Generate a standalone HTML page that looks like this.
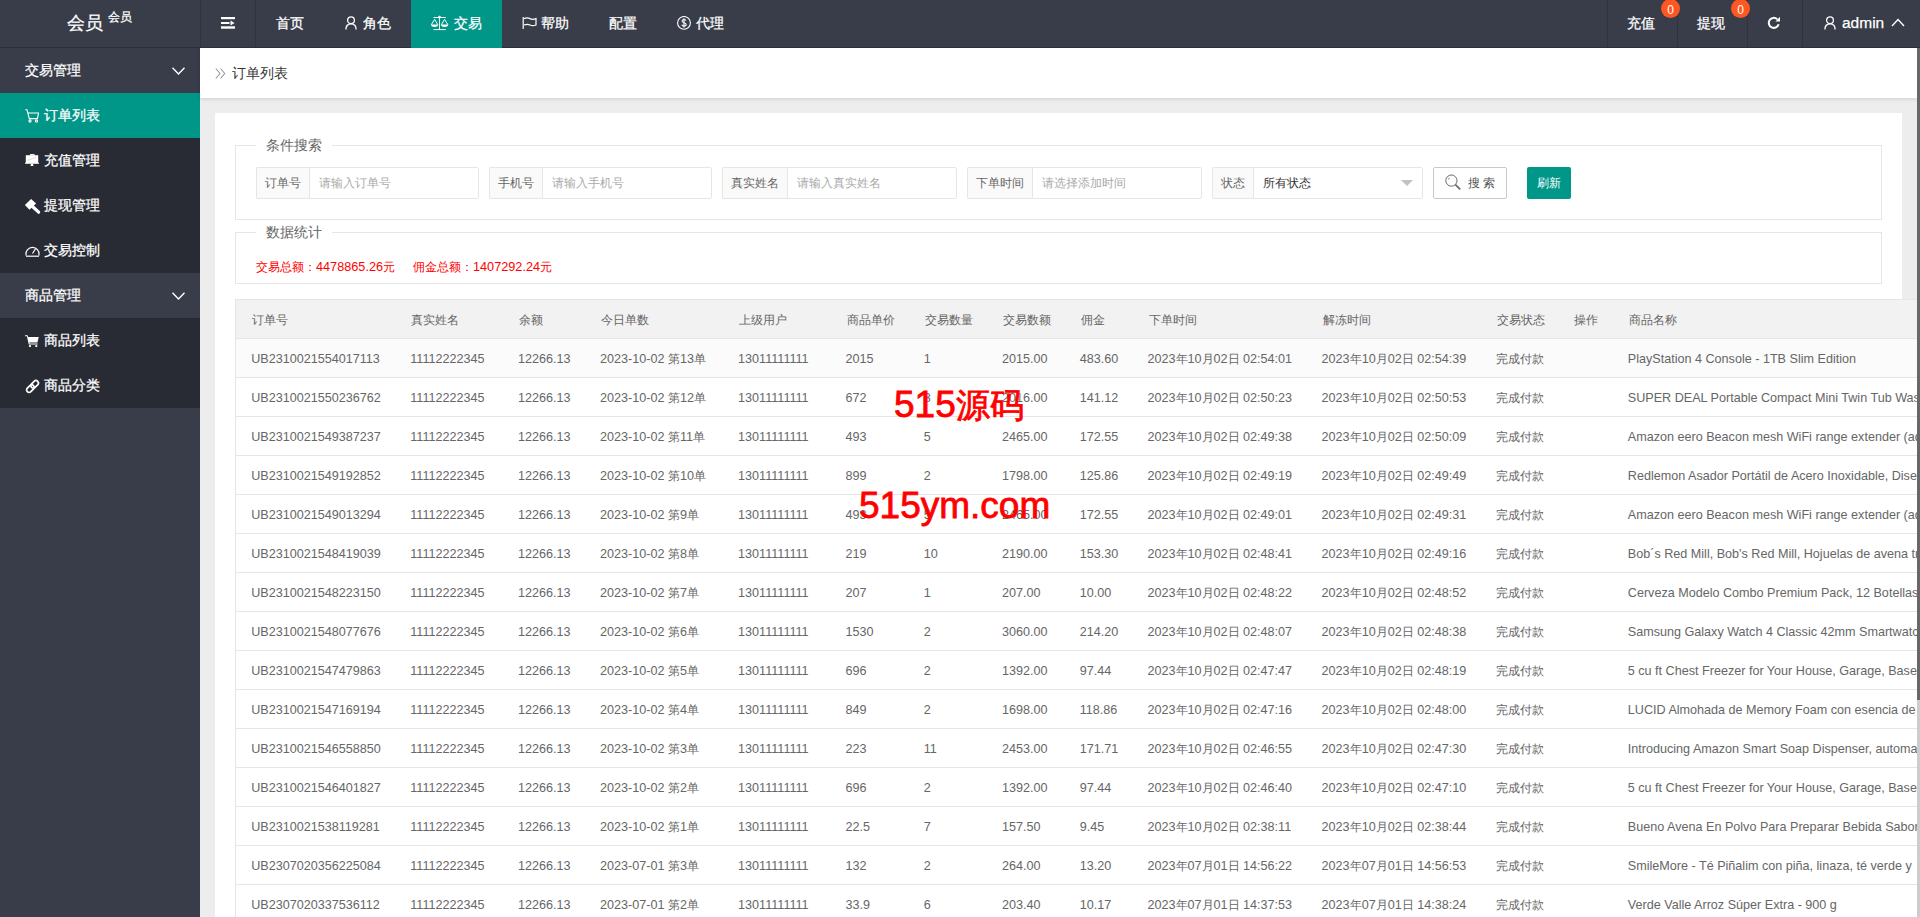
<!DOCTYPE html>
<html><head><meta charset="utf-8">
<style>
*{box-sizing:border-box;margin:0;padding:0}
html,body{width:1920px;height:917px;overflow:hidden}
body{position:relative;background:#ededed;font-family:"Liberation Sans",sans-serif;color:#666}
.abs{position:absolute}
.hd{position:absolute;z-index:3;left:0;top:0;width:1920px;height:48px;background:#393d49;border-bottom:1px solid #2c2f3a}
.hd .t{position:absolute;color:#fff;-webkit-text-stroke:0.25px #fff;font-size:14px;line-height:16px;white-space:nowrap}
.sep{position:absolute;top:0;width:1px;height:47px;background:#30333c}
.side{position:absolute;left:0;top:48px;width:200px;height:869px;background:#393d49}
.mi{position:absolute;left:0;width:200px;height:45px;color:#fff;-webkit-text-stroke:0.25px #fff;font-size:14px;line-height:45px;white-space:nowrap}
.mi .tx{position:absolute;left:25px;top:0}
.mi.ch{background:#282b33}
.mi.ch .tx{left:44px}
.mi.on{background:#009688}
.mi svg{position:absolute}
.crumb{position:absolute;left:200px;top:48px;width:1717px;height:50px;background:#fff;box-shadow:0 1px 4px rgba(0,0,0,.13)}
.card{position:absolute;left:215px;top:113px;width:1687px;height:804px;background:#fff}
.fs{position:absolute;left:235px;width:1647px;border:1px solid #e6e6e6}
.lg{position:absolute;left:256px;padding:0 10px;background:#fff;font-size:14px;line-height:16px;color:#666;white-space:nowrap}
.ig{position:absolute;top:167px;height:32px}
.ig .lb{position:absolute;left:0;top:0;height:32px;background:#fafafa;border:1px solid #e6e6e6;border-right:none;border-radius:2px 0 0 2px;font-size:12px;line-height:30px;padding:0 8px;color:#666;white-space:nowrap}
.ig .in{position:absolute;top:0;height:32px;background:#fff;border:1px solid #e6e6e6;border-radius:0 2px 2px 0;font-size:12px;line-height:30px;padding-left:9px;color:#aaa;white-space:nowrap}
.red{position:absolute;top:259px;font-size:12px;line-height:16px;color:#f00;white-space:nowrap}
.tbl{position:absolute;left:235px;top:299px;width:1682px;height:618px;border-top:1px solid #e6e6e6;border-left:1px solid #e6e6e6;background:#fff;overflow:hidden}
.thead{position:absolute;left:0;top:0;width:100%;height:39px;background:#f2f2f2;border-bottom:1px solid #e6e6e6}
.tr{position:absolute;left:0;width:100%;height:39px;background:#fff;border-bottom:1px solid #e6e6e6}
.tr.r1{background:#fbfbfb}
.th,.td{position:absolute;line-height:38px;font-size:12.6px;margin-left:-1px;margin-top:1px;color:#666;white-space:nowrap}
.th{margin-left:0;color:#666;white-space:nowrap}
.th i,.td i{font-style:normal;font-size:12px}
.wm{position:absolute;color:#f00;font-weight:normal;-webkit-text-stroke:0.8px #f00;white-space:nowrap;font-family:"Liberation Sans",sans-serif}
.sb{position:absolute;left:1917px;top:48px;width:3px;height:869px;background:#cdcdcd}
.sb i{position:absolute;left:0;top:0;width:3px;height:652px;background:#686868}
</style></head><body>

<!-- header -->
<div class="hd">
  <div class="t" style="left:67px;top:13px;font-size:18px;line-height:20px">会员</div>
  <div class="t" style="left:108px;top:10px;font-size:12px;line-height:14px">会员</div>
  <div class="sep" style="left:200px"></div>
  <div class="sep" style="left:255px"></div>
  <svg class="abs" style="left:221px;top:17px" width="15" height="12" viewBox="0 0 15 12" fill="#fff"><rect x="0" y="0" width="14" height="2.2"/><rect x="0" y="5" width="8.5" height="2"/><polygon points="9.5,3.6 13.6,6 9.5,8.4"/><rect x="0" y="9.3" width="14" height="2.4"/></svg>
  <div class="t" style="left:276px;top:15px">首页</div>
  <svg class="abs" style="left:345px;top:16px" width="12" height="14" viewBox="0 0 12 14" fill="none" stroke="#fff" stroke-width="1.3"><circle cx="6" cy="4.2" r="3.4"/><path d="M0.9 13.5C0.9 9.8 3.2 7.8 6 7.8S11.1 9.8 11.1 13.5"/></svg>
  <div class="t" style="left:363px;top:15px">角色</div>
  <div class="abs" style="left:411px;top:0;width:91px;height:48px;background:#009688"></div>
  <svg class="abs" style="left:430px;top:15px" width="20" height="16" viewBox="0 0 20 16" fill="none" stroke="#fff" stroke-width="1"><path d="M3.5 2.5H15.7M9.5 2.5V14.6M3.5 14.6H15.7M4.6 4.4L1.3 9.7M4.6 4.4L7.8 9.7M14.6 4.4L11.3 9.7M14.6 4.4L17.9 9.7"/><circle cx="9.5" cy="2.2" r="1" fill="#fff"/><path d="M1 9.6H8.2A3.6 2.4 0 0 1 1 9.6Z M11 9.6H18.2A3.6 2.4 0 0 1 11 9.6Z" fill="#fff" stroke="none"/></svg>
  <div class="t" style="left:454px;top:15px">交易</div>
  <svg class="abs" style="left:521px;top:16px" width="16" height="14" viewBox="0 0 16 14" fill="none" stroke="#fff" stroke-width="1.2"><path d="M2.2 1V13"/><path d="M3 2.6C5.5 1.6 7.5 1.8 9 2.6S12.5 3.6 15 2.6V9C12.5 10 10.5 9.8 9 9S5.5 8 3 9"/></svg>
  <div class="t" style="left:541px;top:15px">帮助</div>
  <div class="t" style="left:609px;top:15px">配置</div>
  <svg class="abs" style="left:677px;top:16px" width="15" height="15" viewBox="0 0 15 15" fill="none" stroke="#fff" stroke-width="1.1"><circle cx="7" cy="6.9" r="6.4"/><path d="M9 4.6C8.6 3.9 7.9 3.5 7 3.5 5.9 3.5 5.1 4.1 5.1 5 5.1 7.2 9.2 6.3 9.2 8.6 9.2 9.6 8.3 10.2 7 10.2 5.9 10.2 5.1 9.6 4.8 8.8M7 2.2V11.6"/></svg>
  <div class="t" style="left:696px;top:15px">代理</div>

  <div class="sep" style="left:1607px"></div>
  <div class="sep" style="left:1677px"></div>
  <div class="sep" style="left:1747px"></div>
  <div class="sep" style="left:1802px"></div>
  <div class="t" style="left:1627px;top:15px">充值</div>
  <div class="abs" style="left:1661px;top:-1px;width:19px;height:19px;border-radius:50%;background:#ff5722;color:#fff;font-size:12px;line-height:22px;text-align:center">0</div>
  <div class="t" style="left:1697px;top:15px">提现</div>
  <div class="abs" style="left:1731px;top:-1px;width:19px;height:19px;border-radius:50%;background:#ff5722;color:#fff;font-size:12px;line-height:22px;text-align:center">0</div>
  <svg class="abs" style="left:1767px;top:16px" width="14" height="14" viewBox="0 0 14 14" fill="none" stroke="#fff" stroke-width="2"><path d="M11.6 8.2A5 5 0 1 1 10.2 3.2"/><path d="M13 0.8V5.4H8.4Z" fill="#fff" stroke="none"/></svg>
  <svg class="abs" style="left:1824px;top:16px" width="12" height="14" viewBox="0 0 12 14" fill="none" stroke="#fff" stroke-width="1.3"><circle cx="6" cy="4.2" r="3.4"/><path d="M0.9 13.5C0.9 9.8 3.2 7.8 6 7.8S11.1 9.8 11.1 13.5"/></svg>
  <div class="t" style="left:1842px;top:14px;font-size:15.5px;line-height:18px">admin</div>
  <svg class="abs" style="left:1891px;top:18px" width="14" height="9" viewBox="0 0 14 9" fill="none" stroke="#fff" stroke-width="1.4"><path d="M1 8L7 1.5L13 8"/></svg>
</div>

<!-- sidebar -->
<div class="side">
  <div class="mi" style="top:0"><span class="tx">交易管理</span><svg style="left:172px;top:19px" width="13" height="8" viewBox="0 0 13 8" fill="none" stroke="#fff" stroke-width="1.4"><path d="M0.5 0.8L6.5 7L12.5 0.8"/></svg></div>
  <div class="mi ch on" style="top:45px"><svg style="left:25px;top:16px" width="14" height="14" viewBox="0 0 14 14" fill="none" stroke="#fff" stroke-width="1.1"><path d="M0.3 0.8H2L4.3 9.6H12.4L13.6 4H3"/><circle cx="5" cy="12" r="1.1"/><circle cx="11.5" cy="12" r="1.1"/></svg><span class="tx">订单列表</span></div>
  <div class="mi ch" style="top:90px"><svg style="left:24px;top:16px" width="16" height="13" viewBox="0 0 16 13"><rect x="6" y="0" width="4.6" height="1.6" fill="#e8e8f0"/><rect x="1.8" y="1.2" width="12.4" height="8" fill="#fff"/><rect x="1" y="8.6" width="14" height="1.2" fill="#f4f4f4"/><path d="M3.5 6.5L6 5.5L8 4.8L10.5 4.2L12.5 3" stroke="#e9c9c9" stroke-width="0.8" fill="none"/><path d="M7.2 9.6H8.8L9.6 12H6.4Z" fill="#fff"/></svg><span class="tx">充值管理</span></div>
  <div class="mi ch" style="top:135px"><svg style="left:24px;top:15px" width="17" height="17" viewBox="0 0 17 17"><path d="M7.1 0.9L12.1 5.4L5.5 11.7L0.9 7.1Z" fill="#fff"/><path d="M8.5 8.5L14.6 14.2" stroke="#fff" stroke-width="3.2" stroke-linecap="round"/></svg><span class="tx">提现管理</span></div>
  <div class="mi ch" style="top:180px"><svg style="left:25px;top:16px" width="15" height="13" viewBox="0 0 15 13" fill="none" stroke="#fff" stroke-width="1.2"><path d="M1.2 11.5A6.5 6.5 0 1 1 13.8 11.5"/><path d="M7.5 9.5L10.5 4.8"/><path d="M1 12.2H14" stroke-width="1.2"/></svg><span class="tx">交易控制</span></div>
  <div class="mi" style="top:225px"><span class="tx">商品管理</span><svg style="left:172px;top:19px" width="13" height="8" viewBox="0 0 13 8" fill="none" stroke="#fff" stroke-width="1.4"><path d="M0.5 0.8L6.5 7L12.5 0.8"/></svg></div>
  <div class="mi ch" style="top:270px"><svg style="left:25px;top:17px" width="14" height="12" viewBox="0 0 14 12" fill="#fff"><path d="M0 0.3H2.5L3.2 2H13.8L12.4 7.5H4.3L4.6 8.6H12.6V9.6H3.8L1.9 1.3H0Z"/><circle cx="5" cy="11" r="1.1"/><circle cx="11.3" cy="11" r="1.1"/></svg><span class="tx">商品列表</span></div>
  <div class="mi ch" style="top:315px"><svg style="left:24px;top:15px" width="17" height="17" viewBox="0 0 17 17" fill="none" stroke="#fff" stroke-width="1.7"><g transform="rotate(-45 8.5 8.5)"><rect x="1.2" y="6" width="8.6" height="5" rx="2.5"/><rect x="7.2" y="6" width="8.6" height="5" rx="2.5"/></g></svg><span class="tx">商品分类</span></div>
</div>

<!-- breadcrumb -->
<div class="crumb">
  <svg class="abs" style="left:15px;top:20px" width="11" height="11" viewBox="0 0 11 11" fill="none" stroke="#999" stroke-width="1.1"><path d="M0.8 0.5L5 5.5L0.8 10.5M5.5 0.5L9.7 5.5L5.5 10.5"/></svg>
  <div class="abs" style="left:32px;top:17px;font-size:14px;line-height:16px;color:#333;white-space:nowrap">订单列表</div>
</div>

<!-- card -->
<div class="card"></div>
<div class="fs" style="top:145px;height:75px"></div>
<div class="lg" style="top:137px">条件搜索</div>
<div class="ig" style="left:256px"><div class="lb" style="width:53px">订单号</div><div class="in" style="left:53px;width:170px">请输入订单号</div></div>
<div class="ig" style="left:489px"><div class="lb" style="width:53px">手机号</div><div class="in" style="left:53px;width:170px">请输入手机号</div></div>
<div class="ig" style="left:722px"><div class="lb" style="width:65px">真实姓名</div><div class="in" style="left:65px;width:170px">请输入真实姓名</div></div>
<div class="ig" style="left:967px"><div class="lb" style="width:65px">下单时间</div><div class="in" style="left:65px;width:170px">请选择添加时间</div></div>
<div class="ig" style="left:1212px"><div class="lb" style="width:41px">状态</div><div class="in" style="left:41px;width:170px;color:#333">所有状态</div>
  <svg class="abs" style="left:189px;top:13px" width="12" height="6" viewBox="0 0 12 6" fill="#c2c2c2"><path d="M0 0H12L6 6Z"/></svg></div>
<div class="abs" style="left:1433px;top:167px;width:74px;height:32px;border:1px solid #c9c9c9;border-radius:2px;background:#fff"></div>
<svg class="abs" style="left:1445px;top:174px" width="17" height="17" viewBox="0 0 17 17" fill="none" stroke="#666" stroke-width="1"><circle cx="6.4" cy="6.6" r="5.6"/><path d="M10.4 10.6L15.2 15.4" stroke-width="1.6"/><path d="M3.6 5.4A3 3 0 0 1 4.6 3.8"/></svg>
<div class="abs" style="left:1468px;top:176px;font-size:12px;line-height:14px;color:#555;white-space:nowrap">搜 索</div>
<div class="abs" style="left:1527px;top:167px;width:44px;height:32px;border-radius:2px;background:#009688;color:#fff;font-size:12px;line-height:32px;text-align:center">刷新</div>

<div class="fs" style="top:232px;height:52px"></div>
<div class="lg" style="top:224px">数据统计</div>
<div class="red" style="left:256px">交易总额：<span style="font-size:12.7px">4478865.26</span>元</div>
<div class="red" style="left:413px">佣金总额：<span style="font-size:12.7px">1407292.24</span>元</div>

<!-- table -->
<div class="tbl">
<div class="thead"></div>
<span class="th" style="left:16.20px;top:0px"><i>订单号</i></span><span class="th" style="left:175.25px;top:0px"><i>真实姓名</i></span><span class="th" style="left:282.90px;top:0px"><i>余额</i></span><span class="th" style="left:365.00px;top:0px"><i>今日单数</i></span><span class="th" style="left:503.10px;top:0px"><i>上级用户</i></span><span class="th" style="left:610.60px;top:0px"><i>商品单价</i></span><span class="th" style="left:688.75px;top:0px"><i>交易数量</i></span><span class="th" style="left:766.90px;top:0px"><i>交易数额</i></span><span class="th" style="left:844.70px;top:0px"><i>佣金</i></span><span class="th" style="left:912.50px;top:0px"><i>下单时间</i></span><span class="th" style="left:1086.60px;top:0px"><i>解冻时间</i></span><span class="th" style="left:1260.60px;top:0px"><i>交易状态</i></span><span class="th" style="left:1338.40px;top:0px"><i>操作</i></span><span class="th" style="left:1392.80px;top:0px"><i>商品名称</i></span>
<div class="tr r1" style="top:39px"></div>
<span class="td" style="left:16.20px;top:39px">UB2310021554017113</span><span class="td" style="left:175.25px;top:39px">11112222345</span><span class="td" style="left:282.90px;top:39px">12266.13</span><span class="td" style="left:365.00px;top:39px">2023-10-02 <i>第</i>13<i>单</i></span><span class="td" style="left:503.10px;top:39px">13011111111</span><span class="td" style="left:610.60px;top:39px">2015</span><span class="td" style="left:688.75px;top:39px">1</span><span class="td" style="left:766.90px;top:39px">2015.00</span><span class="td" style="left:844.70px;top:39px">483.60</span><span class="td" style="left:912.50px;top:39px">2023<i>年</i>10<i>月</i>02<i>日</i> 02:54:01</span><span class="td" style="left:1086.60px;top:39px">2023<i>年</i>10<i>月</i>02<i>日</i> 02:54:39</span><span class="td" style="left:1260.60px;top:39px"><i>完成付款</i></span><span class="td" style="left:1338.40px;top:39px"></span><span class="td" style="left:1392.80px;top:39px">PlayStation 4 Console - 1TB Slim Edition</span>
<div class="tr" style="top:78px"></div>
<span class="td" style="left:16.20px;top:78px">UB2310021550236762</span><span class="td" style="left:175.25px;top:78px">11112222345</span><span class="td" style="left:282.90px;top:78px">12266.13</span><span class="td" style="left:365.00px;top:78px">2023-10-02 <i>第</i>12<i>单</i></span><span class="td" style="left:503.10px;top:78px">13011111111</span><span class="td" style="left:610.60px;top:78px">672</span><span class="td" style="left:688.75px;top:78px">3</span><span class="td" style="left:766.90px;top:78px">2016.00</span><span class="td" style="left:844.70px;top:78px">141.12</span><span class="td" style="left:912.50px;top:78px">2023<i>年</i>10<i>月</i>02<i>日</i> 02:50:23</span><span class="td" style="left:1086.60px;top:78px">2023<i>年</i>10<i>月</i>02<i>日</i> 02:50:53</span><span class="td" style="left:1260.60px;top:78px"><i>完成付款</i></span><span class="td" style="left:1338.40px;top:78px"></span><span class="td" style="left:1392.80px;top:78px">SUPER DEAL Portable Compact Mini Twin Tub Washing Machine</span>
<div class="tr" style="top:117px"></div>
<span class="td" style="left:16.20px;top:117px">UB2310021549387237</span><span class="td" style="left:175.25px;top:117px">11112222345</span><span class="td" style="left:282.90px;top:117px">12266.13</span><span class="td" style="left:365.00px;top:117px">2023-10-02 <i>第</i>11<i>单</i></span><span class="td" style="left:503.10px;top:117px">13011111111</span><span class="td" style="left:610.60px;top:117px">493</span><span class="td" style="left:688.75px;top:117px">5</span><span class="td" style="left:766.90px;top:117px">2465.00</span><span class="td" style="left:844.70px;top:117px">172.55</span><span class="td" style="left:912.50px;top:117px">2023<i>年</i>10<i>月</i>02<i>日</i> 02:49:38</span><span class="td" style="left:1086.60px;top:117px">2023<i>年</i>10<i>月</i>02<i>日</i> 02:50:09</span><span class="td" style="left:1260.60px;top:117px"><i>完成付款</i></span><span class="td" style="left:1338.40px;top:117px"></span><span class="td" style="left:1392.80px;top:117px">Amazon eero Beacon mesh WiFi range extender (add-on to eero)</span>
<div class="tr" style="top:156px"></div>
<span class="td" style="left:16.20px;top:156px">UB2310021549192852</span><span class="td" style="left:175.25px;top:156px">11112222345</span><span class="td" style="left:282.90px;top:156px">12266.13</span><span class="td" style="left:365.00px;top:156px">2023-10-02 <i>第</i>10<i>单</i></span><span class="td" style="left:503.10px;top:156px">13011111111</span><span class="td" style="left:610.60px;top:156px">899</span><span class="td" style="left:688.75px;top:156px">2</span><span class="td" style="left:766.90px;top:156px">1798.00</span><span class="td" style="left:844.70px;top:156px">125.86</span><span class="td" style="left:912.50px;top:156px">2023<i>年</i>10<i>月</i>02<i>日</i> 02:49:19</span><span class="td" style="left:1086.60px;top:156px">2023<i>年</i>10<i>月</i>02<i>日</i> 02:49:49</span><span class="td" style="left:1260.60px;top:156px"><i>完成付款</i></span><span class="td" style="left:1338.40px;top:156px"></span><span class="td" style="left:1392.80px;top:156px">Redlemon Asador Portátil de Acero Inoxidable, Diseño</span>
<div class="tr" style="top:195px"></div>
<span class="td" style="left:16.20px;top:195px">UB2310021549013294</span><span class="td" style="left:175.25px;top:195px">11112222345</span><span class="td" style="left:282.90px;top:195px">12266.13</span><span class="td" style="left:365.00px;top:195px">2023-10-02 <i>第</i>9<i>单</i></span><span class="td" style="left:503.10px;top:195px">13011111111</span><span class="td" style="left:610.60px;top:195px">493</span><span class="td" style="left:688.75px;top:195px">5</span><span class="td" style="left:766.90px;top:195px">2465.00</span><span class="td" style="left:844.70px;top:195px">172.55</span><span class="td" style="left:912.50px;top:195px">2023<i>年</i>10<i>月</i>02<i>日</i> 02:49:01</span><span class="td" style="left:1086.60px;top:195px">2023<i>年</i>10<i>月</i>02<i>日</i> 02:49:31</span><span class="td" style="left:1260.60px;top:195px"><i>完成付款</i></span><span class="td" style="left:1338.40px;top:195px"></span><span class="td" style="left:1392.80px;top:195px">Amazon eero Beacon mesh WiFi range extender (add-on to eero)</span>
<div class="tr" style="top:234px"></div>
<span class="td" style="left:16.20px;top:234px">UB2310021548419039</span><span class="td" style="left:175.25px;top:234px">11112222345</span><span class="td" style="left:282.90px;top:234px">12266.13</span><span class="td" style="left:365.00px;top:234px">2023-10-02 <i>第</i>8<i>单</i></span><span class="td" style="left:503.10px;top:234px">13011111111</span><span class="td" style="left:610.60px;top:234px">219</span><span class="td" style="left:688.75px;top:234px">10</span><span class="td" style="left:766.90px;top:234px">2190.00</span><span class="td" style="left:844.70px;top:234px">153.30</span><span class="td" style="left:912.50px;top:234px">2023<i>年</i>10<i>月</i>02<i>日</i> 02:48:41</span><span class="td" style="left:1086.60px;top:234px">2023<i>年</i>10<i>月</i>02<i>日</i> 02:49:16</span><span class="td" style="left:1260.60px;top:234px"><i>完成付款</i></span><span class="td" style="left:1338.40px;top:234px"></span><span class="td" style="left:1392.80px;top:234px">Bob´s Red Mill, Bob's Red Mill, Hojuelas de avena tradicionales</span>
<div class="tr" style="top:273px"></div>
<span class="td" style="left:16.20px;top:273px">UB2310021548223150</span><span class="td" style="left:175.25px;top:273px">11112222345</span><span class="td" style="left:282.90px;top:273px">12266.13</span><span class="td" style="left:365.00px;top:273px">2023-10-02 <i>第</i>7<i>单</i></span><span class="td" style="left:503.10px;top:273px">13011111111</span><span class="td" style="left:610.60px;top:273px">207</span><span class="td" style="left:688.75px;top:273px">1</span><span class="td" style="left:766.90px;top:273px">207.00</span><span class="td" style="left:844.70px;top:273px">10.00</span><span class="td" style="left:912.50px;top:273px">2023<i>年</i>10<i>月</i>02<i>日</i> 02:48:22</span><span class="td" style="left:1086.60px;top:273px">2023<i>年</i>10<i>月</i>02<i>日</i> 02:48:52</span><span class="td" style="left:1260.60px;top:273px"><i>完成付款</i></span><span class="td" style="left:1338.40px;top:273px"></span><span class="td" style="left:1392.80px;top:273px">Cerveza Modelo Combo Premium Pack, 12 Botellas</span>
<div class="tr" style="top:312px"></div>
<span class="td" style="left:16.20px;top:312px">UB2310021548077676</span><span class="td" style="left:175.25px;top:312px">11112222345</span><span class="td" style="left:282.90px;top:312px">12266.13</span><span class="td" style="left:365.00px;top:312px">2023-10-02 <i>第</i>6<i>单</i></span><span class="td" style="left:503.10px;top:312px">13011111111</span><span class="td" style="left:610.60px;top:312px">1530</span><span class="td" style="left:688.75px;top:312px">2</span><span class="td" style="left:766.90px;top:312px">3060.00</span><span class="td" style="left:844.70px;top:312px">214.20</span><span class="td" style="left:912.50px;top:312px">2023<i>年</i>10<i>月</i>02<i>日</i> 02:48:07</span><span class="td" style="left:1086.60px;top:312px">2023<i>年</i>10<i>月</i>02<i>日</i> 02:48:38</span><span class="td" style="left:1260.60px;top:312px"><i>完成付款</i></span><span class="td" style="left:1338.40px;top:312px"></span><span class="td" style="left:1392.80px;top:312px">Samsung Galaxy Watch 4 Classic 42mm Smartwatch</span>
<div class="tr" style="top:351px"></div>
<span class="td" style="left:16.20px;top:351px">UB2310021547479863</span><span class="td" style="left:175.25px;top:351px">11112222345</span><span class="td" style="left:282.90px;top:351px">12266.13</span><span class="td" style="left:365.00px;top:351px">2023-10-02 <i>第</i>5<i>单</i></span><span class="td" style="left:503.10px;top:351px">13011111111</span><span class="td" style="left:610.60px;top:351px">696</span><span class="td" style="left:688.75px;top:351px">2</span><span class="td" style="left:766.90px;top:351px">1392.00</span><span class="td" style="left:844.70px;top:351px">97.44</span><span class="td" style="left:912.50px;top:351px">2023<i>年</i>10<i>月</i>02<i>日</i> 02:47:47</span><span class="td" style="left:1086.60px;top:351px">2023<i>年</i>10<i>月</i>02<i>日</i> 02:48:19</span><span class="td" style="left:1260.60px;top:351px"><i>完成付款</i></span><span class="td" style="left:1338.40px;top:351px"></span><span class="td" style="left:1392.80px;top:351px">5 cu ft Chest Freezer for Your House, Garage, Basement</span>
<div class="tr" style="top:390px"></div>
<span class="td" style="left:16.20px;top:390px">UB2310021547169194</span><span class="td" style="left:175.25px;top:390px">11112222345</span><span class="td" style="left:282.90px;top:390px">12266.13</span><span class="td" style="left:365.00px;top:390px">2023-10-02 <i>第</i>4<i>单</i></span><span class="td" style="left:503.10px;top:390px">13011111111</span><span class="td" style="left:610.60px;top:390px">849</span><span class="td" style="left:688.75px;top:390px">2</span><span class="td" style="left:766.90px;top:390px">1698.00</span><span class="td" style="left:844.70px;top:390px">118.86</span><span class="td" style="left:912.50px;top:390px">2023<i>年</i>10<i>月</i>02<i>日</i> 02:47:16</span><span class="td" style="left:1086.60px;top:390px">2023<i>年</i>10<i>月</i>02<i>日</i> 02:48:00</span><span class="td" style="left:1260.60px;top:390px"><i>完成付款</i></span><span class="td" style="left:1338.40px;top:390px"></span><span class="td" style="left:1392.80px;top:390px">LUCID Almohada de Memory Foam con esencia de lavanda</span>
<div class="tr" style="top:429px"></div>
<span class="td" style="left:16.20px;top:429px">UB2310021546558850</span><span class="td" style="left:175.25px;top:429px">11112222345</span><span class="td" style="left:282.90px;top:429px">12266.13</span><span class="td" style="left:365.00px;top:429px">2023-10-02 <i>第</i>3<i>单</i></span><span class="td" style="left:503.10px;top:429px">13011111111</span><span class="td" style="left:610.60px;top:429px">223</span><span class="td" style="left:688.75px;top:429px">11</span><span class="td" style="left:766.90px;top:429px">2453.00</span><span class="td" style="left:844.70px;top:429px">171.71</span><span class="td" style="left:912.50px;top:429px">2023<i>年</i>10<i>月</i>02<i>日</i> 02:46:55</span><span class="td" style="left:1086.60px;top:429px">2023<i>年</i>10<i>月</i>02<i>日</i> 02:47:30</span><span class="td" style="left:1260.60px;top:429px"><i>完成付款</i></span><span class="td" style="left:1338.40px;top:429px"></span><span class="td" style="left:1392.80px;top:429px">Introducing Amazon Smart Soap Dispenser, automatic</span>
<div class="tr" style="top:468px"></div>
<span class="td" style="left:16.20px;top:468px">UB2310021546401827</span><span class="td" style="left:175.25px;top:468px">11112222345</span><span class="td" style="left:282.90px;top:468px">12266.13</span><span class="td" style="left:365.00px;top:468px">2023-10-02 <i>第</i>2<i>单</i></span><span class="td" style="left:503.10px;top:468px">13011111111</span><span class="td" style="left:610.60px;top:468px">696</span><span class="td" style="left:688.75px;top:468px">2</span><span class="td" style="left:766.90px;top:468px">1392.00</span><span class="td" style="left:844.70px;top:468px">97.44</span><span class="td" style="left:912.50px;top:468px">2023<i>年</i>10<i>月</i>02<i>日</i> 02:46:40</span><span class="td" style="left:1086.60px;top:468px">2023<i>年</i>10<i>月</i>02<i>日</i> 02:47:10</span><span class="td" style="left:1260.60px;top:468px"><i>完成付款</i></span><span class="td" style="left:1338.40px;top:468px"></span><span class="td" style="left:1392.80px;top:468px">5 cu ft Chest Freezer for Your House, Garage, Basement</span>
<div class="tr" style="top:507px"></div>
<span class="td" style="left:16.20px;top:507px">UB2310021538119281</span><span class="td" style="left:175.25px;top:507px">11112222345</span><span class="td" style="left:282.90px;top:507px">12266.13</span><span class="td" style="left:365.00px;top:507px">2023-10-02 <i>第</i>1<i>单</i></span><span class="td" style="left:503.10px;top:507px">13011111111</span><span class="td" style="left:610.60px;top:507px">22.5</span><span class="td" style="left:688.75px;top:507px">7</span><span class="td" style="left:766.90px;top:507px">157.50</span><span class="td" style="left:844.70px;top:507px">9.45</span><span class="td" style="left:912.50px;top:507px">2023<i>年</i>10<i>月</i>02<i>日</i> 02:38:11</span><span class="td" style="left:1086.60px;top:507px">2023<i>年</i>10<i>月</i>02<i>日</i> 02:38:44</span><span class="td" style="left:1260.60px;top:507px"><i>完成付款</i></span><span class="td" style="left:1338.40px;top:507px"></span><span class="td" style="left:1392.80px;top:507px">Bueno Avena En Polvo Para Preparar Bebida Sabor Natural</span>
<div class="tr" style="top:546px"></div>
<span class="td" style="left:16.20px;top:546px">UB2307020356225084</span><span class="td" style="left:175.25px;top:546px">11112222345</span><span class="td" style="left:282.90px;top:546px">12266.13</span><span class="td" style="left:365.00px;top:546px">2023-07-01 <i>第</i>3<i>单</i></span><span class="td" style="left:503.10px;top:546px">13011111111</span><span class="td" style="left:610.60px;top:546px">132</span><span class="td" style="left:688.75px;top:546px">2</span><span class="td" style="left:766.90px;top:546px">264.00</span><span class="td" style="left:844.70px;top:546px">13.20</span><span class="td" style="left:912.50px;top:546px">2023<i>年</i>07<i>月</i>01<i>日</i> 14:56:22</span><span class="td" style="left:1086.60px;top:546px">2023<i>年</i>07<i>月</i>01<i>日</i> 14:56:53</span><span class="td" style="left:1260.60px;top:546px"><i>完成付款</i></span><span class="td" style="left:1338.40px;top:546px"></span><span class="td" style="left:1392.80px;top:546px">SmileMore - Té Piñalim con piña, linaza, té verde y</span>
<div class="tr" style="top:585px"></div>
<span class="td" style="left:16.20px;top:585px">UB2307020337536112</span><span class="td" style="left:175.25px;top:585px">11112222345</span><span class="td" style="left:282.90px;top:585px">12266.13</span><span class="td" style="left:365.00px;top:585px">2023-07-01 <i>第</i>2<i>单</i></span><span class="td" style="left:503.10px;top:585px">13011111111</span><span class="td" style="left:610.60px;top:585px">33.9</span><span class="td" style="left:688.75px;top:585px">6</span><span class="td" style="left:766.90px;top:585px">203.40</span><span class="td" style="left:844.70px;top:585px">10.17</span><span class="td" style="left:912.50px;top:585px">2023<i>年</i>07<i>月</i>01<i>日</i> 14:37:53</span><span class="td" style="left:1086.60px;top:585px">2023<i>年</i>07<i>月</i>01<i>日</i> 14:38:24</span><span class="td" style="left:1260.60px;top:585px"><i>完成付款</i></span><span class="td" style="left:1338.40px;top:585px"></span><span class="td" style="left:1392.80px;top:585px">Verde Valle Arroz Súper Extra - 900 g</span>
</div>

<div class="wm" style="left:894px;top:384px;font-size:37px;line-height:42px">515<span style="font-size:34px">源码</span></div>
<div class="wm" style="left:859px;top:485px;font-size:37px;line-height:42px">515ym.com</div>

<div class="sb"><i></i></div>
</body></html>
